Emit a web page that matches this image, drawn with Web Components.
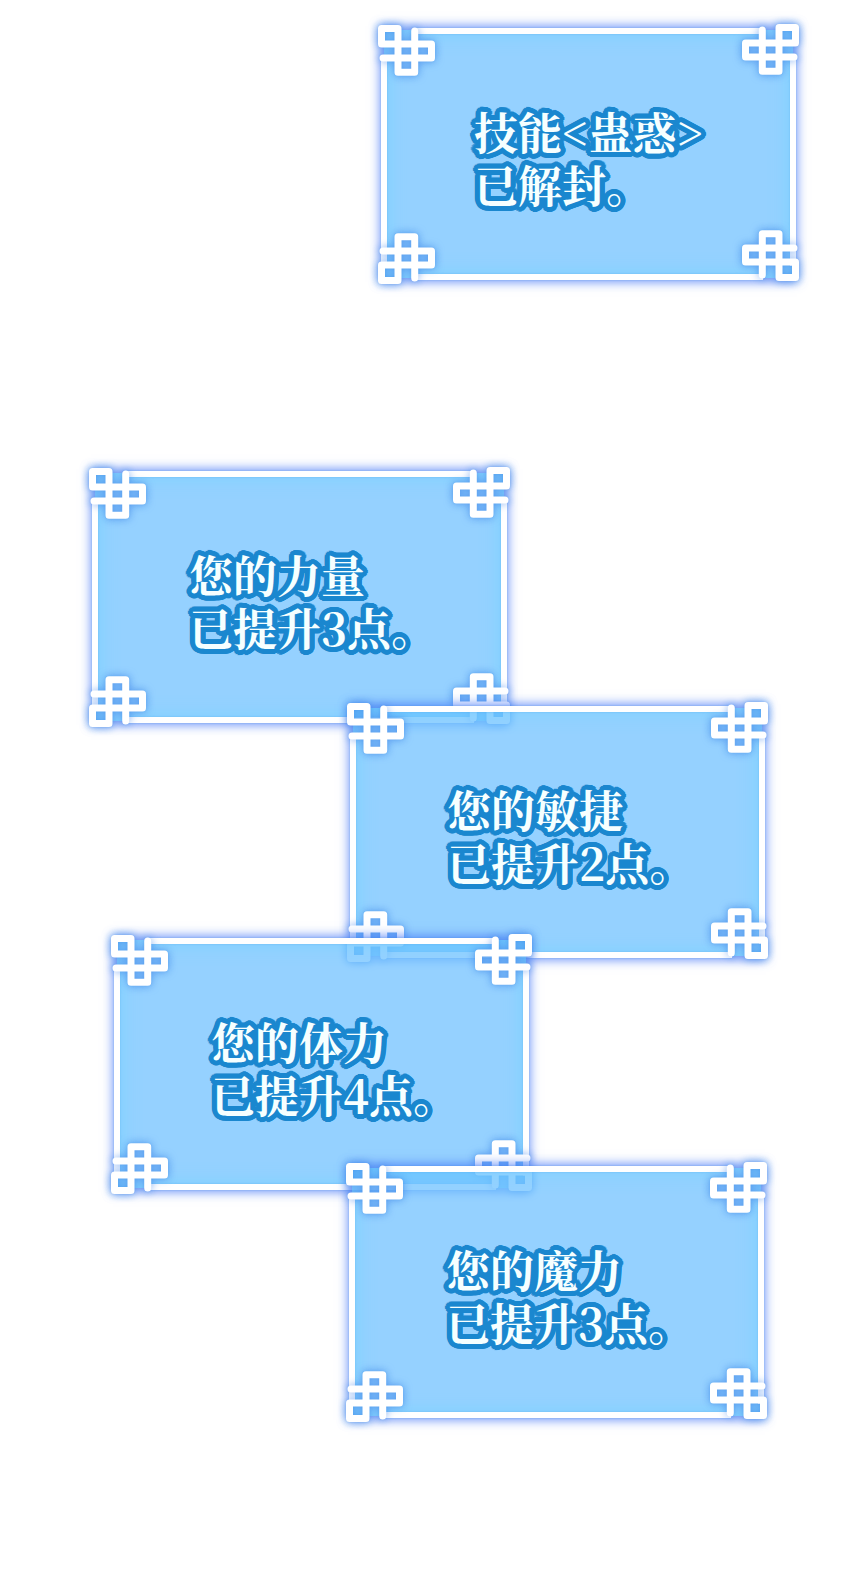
<!DOCTYPE html>
<html lang="zh-CN">
<head>
<meta charset="utf-8">
<meta name="viewport" content="width=device-width, initial-scale=1">
<title>系统提示</title>
<style>
  body { margin: 0; background: #fff; }
</style>
</head>
<body>
<notice-feed>
  <system-notice class="end first"><span>技能&lt;蛊惑&gt;</span><span>已解封。</span></system-notice>
  <system-notice class="start second"><span>您的力量</span><span>已提升3点。</span></system-notice>
  <system-notice class="end third"><span>您的敏捷</span><span>已提升2点。</span></system-notice>
  <system-notice class="start fourth"><span>您的体力</span><span>已提升4点。</span></system-notice>
  <system-notice class="end fifth"><span>您的魔力</span><span>已提升3点。</span></system-notice>
</notice-feed>

<template id="feed-template">
  <style>
    :host { display: flex; flex-direction: column; box-sizing: border-box; min-height: 100vh; padding: 24px 0 156px; }
    ::slotted(.start) { align-self: flex-start; }
    ::slotted(.end) { align-self: flex-end; }
    ::slotted(.first) { margin-right: 51px; --text-start: 96px; }
    ::slotted(.second) { margin: 183px 0 0 89px; }
    ::slotted(.third) { margin: -25px 82px 0 0; }
    ::slotted(.fourth) { margin: -28px 0 0 111px; }
    ::slotted(.fifth) { margin: -32px 83px 0 0; }
  </style>
  <slot></slot>
</template>

<template id="notice-template">
  <style>
    :host { display: block; position: relative; box-sizing: border-box; width: 421px; max-width: 100%; }
    .fill {
      position: absolute; inset: 6px; background: rgba(112, 193, 255, .74);
      box-shadow: inset 0 0 20px 4px rgba(90, 215, 255, .4), 0 0 10px 4px rgba(70, 120, 245, .8);
    }
    .frame { position: absolute; inset: 0; filter: drop-shadow(0 0 1px rgba(60, 150, 225, .35)); }
    .line { position: absolute; background: #fff; }
    .top { top: 4px; left: 36px; right: 36px; height: 6px; }
    .bottom { bottom: 4px; left: 36px; right: 36px; height: 6px; }
    .left { left: 3px; top: 34px; bottom: 18px; width: 6px; }
    .right { right: 3px; top: 34px; bottom: 18px; width: 6px; }
    knot-corner { position: absolute; }
    .tl { left: 0; top: 1px; }
    .tr { right: 0; top: 0; transform: scaleX(-1); }
    .bl { left: 0; bottom: 0; transform: scaleY(-1); }
    .br { right: 0; bottom: 3px; transform: scale(-1); }
    .message {
      position: relative; display: flex; flex-direction: column; margin: 0;
      padding: 81px 0 73px var(--text-start, 100px);
      font: 700 44px/53px "Noto Serif CJK SC", "Noto Serif SC", "Source Han Serif SC", "Noto Sans CJK SC", serif;
      color: #f6ffff; white-space: nowrap; text-autospace: no-autospace;
      text-shadow: var(--outline);
    }
    ::slotted(span) { display: block; height: 53px; }
  </style>
  <div class="fill"></div>
  <div class="frame" aria-hidden="true">
    <div class="line top"></div><div class="line bottom"></div>
    <div class="line left"></div><div class="line right"></div>
    <knot-corner class="tl"></knot-corner><knot-corner class="tr"></knot-corner>
    <knot-corner class="bl"></knot-corner><knot-corner class="br"></knot-corner>
  </div>
  <p class="message"><slot></slot></p>
</template>

<template id="knot-template">
  <style>
    :host { display: block; width: 58px; height: 52px; filter: drop-shadow(0 0 4px rgba(70, 135, 235, .7)); }
    svg { display: block; }
  </style>
  <svg width="58" height="52" viewBox="0 0 58 52" fill="none" stroke="#fff" stroke-width="7" stroke-linecap="round" stroke-linejoin="round">
    <path d="M5 33H53.5V19H3.5V3.5H20V47.3H36.7V6"/>
  </svg>
</template>

<script>
  // A round outline: one hard shadow for every whole pixel within the radius.
  function roundOutline(radius, color) {
    const shadows = [];
    for (let y = -radius; y <= radius; y++) {
      for (let x = -radius; x <= radius; x++) {
        if (x * x + y * y <= radius * radius + 1) shadows.push(`${x}px ${y}px ${color}`);
      }
    }
    return shadows.join(',');
  }
  document.documentElement.style.setProperty('--outline', roundOutline(5, '#1a87cf'));

  function define(name, templateId) {
    customElements.define(name, class extends HTMLElement {
      constructor() {
        super();
        this.attachShadow({ mode: 'open' })
          .append(document.getElementById(templateId).content.cloneNode(true));
      }
    });
  }
  define('knot-corner', 'knot-template');
  define('system-notice', 'notice-template');
  define('notice-feed', 'feed-template');
</script>
</body>
</html>
